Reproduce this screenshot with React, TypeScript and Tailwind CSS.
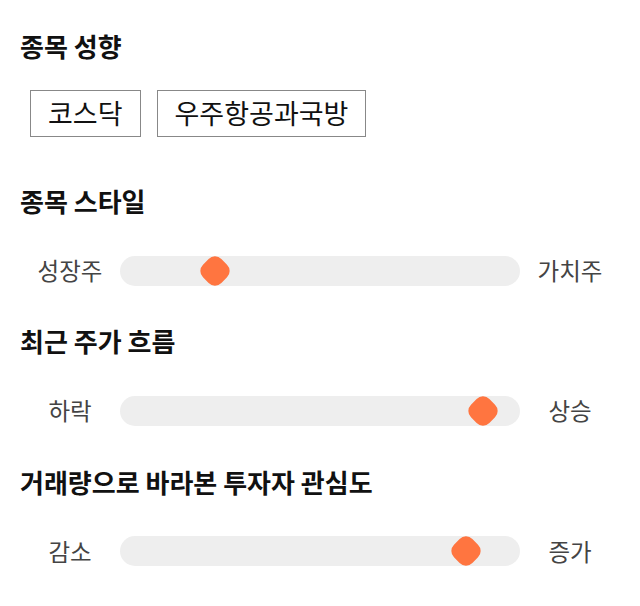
import React from "react";

const tags = ["코스닥", "우주항공과국방"];

const sliders = [
  { title: "종목 스타일", left: "성장주", right: "가치주", value: 23.75 },
  { title: "최근 주가 흐름", left: "하락", right: "상승", value: 90.75 },
  { title: "거래량으로 바라본 투자자 관심도", left: "감소", right: "증가", value: 86.5 },
];

function Heading({ children }: { children: React.ReactNode }) {
  return <h2 className="text-[26px] leading-[36px] font-bold text-[#111]">{children}</h2>;
}

function Scale({ left, right, value }: { left: string; right: string; value: number }) {
  return (
    <div className="flex items-center">
      <span className="w-[100px] text-center text-[23.5px] text-[#444]">{left}</span>
      <div className="relative h-[30px] flex-1 rounded-full bg-[#eeeeee]">
        <div
          className="absolute top-1/2 h-[26px] w-[26px] -translate-x-1/2 -translate-y-1/2 rotate-45 rounded-[9px] bg-[#ff7540]"
          style={{ left: `${value}%` }}
        />
      </div>
      <span className="w-[100px] text-center text-[23.5px] text-[#444]">{right}</span>
    </div>
  );
}

export default function App() {
  return (
    <main
      className="min-h-screen bg-white px-5 pt-[28px]"
      style={{ fontFamily: '"Noto Sans CJK KR", "Noto Sans", sans-serif' }}
    >
      <section>
        <Heading>종목 성향</Heading>
        <div className="mt-[26px] flex gap-4 pl-[10px]">
          {tags.map((t) => (
            <span key={t} className="flex h-[47px] items-center border border-[#888] px-[17px] text-[27px] text-[#111]">
              {t}
            </span>
          ))}
        </div>
      </section>

      {sliders.map((s, i) => (
        <section key={s.title} className={i === 0 ? "mt-[46px]" : "mt-[35px]"}>
          <Heading>{s.title}</Heading>
          <div className="mt-[34px]">
            <Scale left={s.left} right={s.right} value={s.value} />
          </div>
        </section>
      ))}
    </main>
  );
}
